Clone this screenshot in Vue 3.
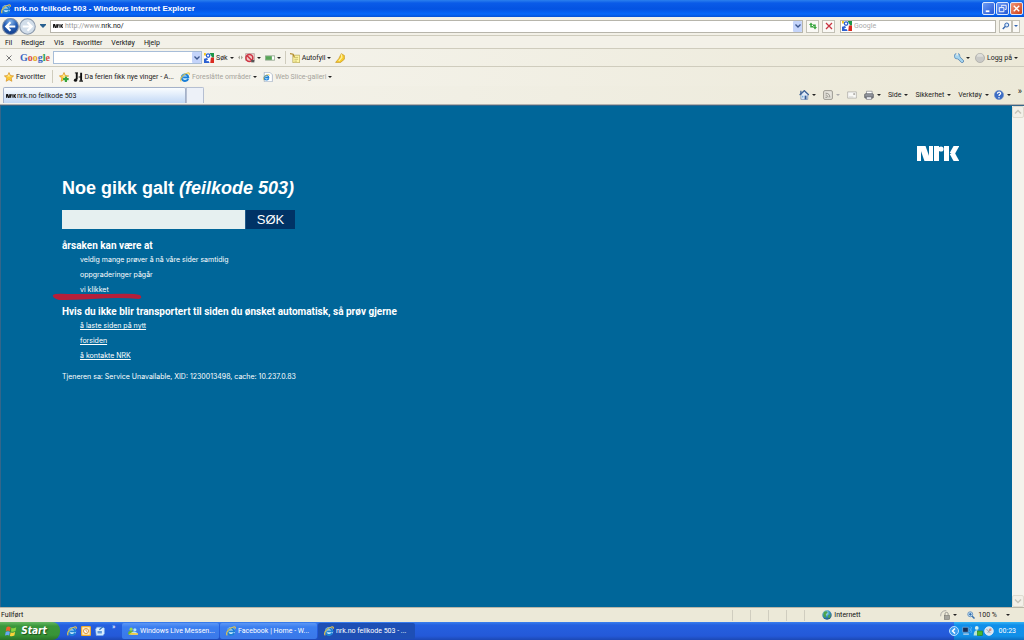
<script setup>
import { ref } from 'vue'

const menus = ['Fil', 'Rediger', 'Vis', 'Favoritter', 'Verktøy', 'Hjelp']
const reasons = ['veldig mange prøver å nå våre sider samtidig', 'oppgraderinger pågår', 'vi klikket']
const links = ['å laste siden på nytt', 'forsiden', 'å kontakte NRK']
const commands = ['Side', 'Sikkerhet', 'Verktøy']
const tasks = [
  { icon: 'messenger', text: 'Windows Live Messen...', active: false },
  { icon: 'ie', text: 'Facebook | Home - W...', active: false },
  { icon: 'ie', text: 'nrk.no feilkode 503 - ...', active: true },
]
const address = ref('nrk.no/')
const query = ref('')
const toolbarQuery = ref('')
const siteQuery = ref('')
</script>

<template>
  <div class="screen">
    <svg class="sprite" aria-hidden="true">
      <defs>
        <radialGradient id="globe" cx=".4" cy=".3" r=".7">
          <stop offset="0" stop-color="#c5ecfa" /><stop offset=".5" stop-color="#3d9bc4" /><stop offset="1" stop-color="#1b5588" />
        </radialGradient>
        <radialGradient id="nav" cx=".5" cy=".2" r=".8">
          <stop offset="0" stop-color="#8bb8ea" /><stop offset=".5" stop-color="#245eb6" /><stop offset="1" stop-color="#123d8a" />
        </radialGradient>
      </defs>
      <symbol id="i-ie" viewBox="0 0 16 16">
        <circle cx="8" cy="8.500" r="6.500" fill="#bfe6fb" />
        <path d="M13 11A5.300 5.300 0 1 1 13.300 8.500H5" fill="none" stroke="#1c7fd6" stroke-width="3" />
        <path d="M2 15C-1 12 4 3 12 1.500c3-.5 3.500 1 2.500 3" fill="none" stroke="#e8c64a" stroke-width="1.800" />
      </symbol>
      <symbol id="i-nrk" viewBox="0 0 42 15">
        <rect x="0" y="0" width="4" height="15" />
        <line x1="5" y1="-1" x2="11" y2="16" stroke="currentColor" stroke-width="6" />
        <rect x="12" y="0" width="4" height="15" />
        <rect x="17" y="0" width="5" height="15" />
        <circle cx="24" cy="3" r="2.600" />
        <rect x="27" y="0" width="5" height="15" />
        <line x1="40" y1="-1" x2="35" y2="8" stroke="currentColor" stroke-width="5" />
        <line x1="35" y1="7" x2="40" y2="16" stroke="currentColor" stroke-width="5" />
      </symbol>
      <symbol id="i-google" viewBox="0 0 16 16">
        <rect width="16" height="16" fill="#fff" />
        <path d="M9 0h7v7h-3z" fill="#1c9648" /><path d="M11 7h5v9h-6z" fill="#d92b20" />
        <path d="M0 9l5-1 4 8H0z" fill="#2b5fd0" /><path d="M0 0h3v4H0z" fill="#f4c51c" />
        <circle cx="6.500" cy="4" r="2.800" fill="none" stroke="#2b5fd0" stroke-width="2" />
        <path d="M4 12h4" stroke="#fff" stroke-width="2" />
      </symbol>
      <symbol id="i-star" viewBox="0 0 16 16">
        <path d="M8 .8l2.200 4.800 5.200.6-3.900 3.500 1.100 5.200L8 12.300l-4.600 2.600 1.100-5.200L.6 6.200l5.200-.6z" fill="#fcc936" stroke="#d28a1c" />
        <path d="M8 3l1.300 3.500 3 .5H5z" fill="#fff0a5" />
      </symbol>
      <symbol id="i-addstar" viewBox="0 0 16 16">
        <use href="#i-star" /><path d="M11 7v9M6.500 11.500h9" stroke="#fff" stroke-width="5" /><path d="M11 7v9M6.500 11.500h9" stroke="#35a33a" stroke-width="3.500" />
      </symbol>
      <symbol id="i-notes" viewBox="0 0 16 16">
        <path d="M6 1v11M13 1v13" stroke="#111" stroke-width="3" /><path d="M3 1.500h5M9 8h5" stroke="#111" stroke-width="1.500" />
        <circle cx="4" cy="13" r="2.600" fill="#111" /><path d="M10 14.500h6" stroke="#111" stroke-width="2" />
      </symbol>
      <symbol id="i-slice" viewBox="0 0 16 16">
        <path d="M2 .5h9l4 4v11H2z" fill="#fff" stroke="#8fa0b8" /><svg x="0" y="3" width="11" height="11"><use href="#i-ie" /></svg>
      </symbol>
      <symbol id="i-block" viewBox="0 0 16 16">
        <path d="M1 1h14v11H1z" fill="#e9d6d4" stroke="#a88" /><circle cx="7" cy="8" r="5.500" fill="#f3c9c9" stroke="#cf3644" stroke-width="2.500" />
        <path d="M3 4l8 8" stroke="#cf3644" stroke-width="2.500" /><path d="M10 11h5v4h-5z" fill="#555" />
      </symbol>
      <symbol id="i-rank" viewBox="0 0 16 16">
        <path d="M.5 4.500h15v7H.5z" fill="#fff" stroke="#688568" /><path d="M1 5h10v6H1z" fill="#58a557" />
      </symbol>
      <symbol id="i-form" viewBox="0 0 16 16">
        <path d="M4.500 3.500h11v12h-11z" fill="#fff7a5" stroke="#a8963c" /><path d="M7 7h6M7 10h6M7 13h4" stroke="#a89b50" />
        <path d="M0 1l5 1 2 5" fill="none" stroke="#b28a28" stroke-width="2" />
      </symbol>
      <symbol id="i-marker" viewBox="0 0 16 16">
        <path d="M10 1l5 3v6l-6 5H1l5-6z" fill="#f7cc2b" stroke="#c08c16" /><path d="M10 2l1 5-5 6" fill="none" stroke="#fff0a0" stroke-width="2" />
      </symbol>
      <symbol id="i-wrench" viewBox="0 0 16 16">
        <path d="M5 5l8 8" stroke="#4677a8" stroke-width="5.500" stroke-linecap="round" />
        <circle cx="5" cy="5" r="4.500" fill="#a6d5ef" stroke="#4677a8" />
        <path d="M5 5l8 8" stroke="#a6d5ef" stroke-width="3.500" stroke-linecap="round" />
        <path d="M5 0v4" stroke="#f0eee2" stroke-width="2.500" />
      </symbol>
      <symbol id="i-user" viewBox="0 0 16 16"><circle cx="8" cy="8" r="7.300" fill="#c9c9c6" stroke="#a2a29f" /><path d="M3 6a5 5 0 0 1 10 0" fill="#deded9" /></symbol>
      <symbol id="i-home" viewBox="0 0 16 16">
        <path d="M3 7v8h11V7L8.500 2z" fill="#dfeaf8" stroke="#617da7" /><path d="M1 8l7.500-7L16 8" fill="none" stroke="#3a6097" stroke-width="2" />
        <path d="M3 1v6" stroke="#3a6097" stroke-width="2" /><path d="M9 9h3v6H9z" fill="#315b98" /><path d="M5 9h2v3H5z" fill="#62a2d5" />
      </symbol>
      <symbol id="i-feed" viewBox="0 0 16 16">
        <rect x="1" y="1" width="14" height="14" rx="2" fill="#e6e4dc" stroke="#96948c" stroke-width="1.500" />
        <path d="M4 5c5 0 7 3 7 7M4 8c3 0 4 2 4 4" fill="none" stroke="#8c8a83" stroke-width="1.500" /><circle cx="5" cy="11.500" r="1.200" fill="#8c8a83" />
      </symbol>
      <symbol id="i-mail" viewBox="0 0 16 16"><path d="M1 3h14v10H1z" fill="#f8f8f5" stroke="#a09f9b" /><path d="M10 5h3v3h-3z" fill="#b4b2ad" /><path d="M3 11h7" stroke="#c2c0bb" /></symbol>
      <symbol id="i-print" viewBox="0 0 16 16">
        <path d="M4 2h9v5H4z" fill="#fff" stroke="#7a7d84" /><rect x="1" y="6" width="14" height="7" rx="1.500" fill="#7b7e85" stroke="#50545c" />
        <path d="M4 11h8v4H4z" fill="#f0f3f8" stroke="#6a6d74" /><path d="M2 8h12" stroke="#c2c5ca" />
      </symbol>
      <symbol id="i-help" viewBox="0 0 16 16">
        <circle cx="8" cy="8" r="7.300" fill="#3b6cc4" stroke="#6f8fc8" /><path d="M5.500 6c0-4 6-3 5 0-.5 1.500-2.500 1.500-2.500 3.500" fill="none" stroke="#fff" stroke-width="2" /><circle cx="8" cy="12.300" r="1.200" fill="#fff" />
      </symbol>
      <symbol id="i-search" viewBox="0 0 16 16"><circle cx="9.500" cy="6" r="4" fill="#d9eafd" stroke="#3467b1" stroke-width="2" /><path d="M6.500 9L1.500 14" stroke="#3467b1" stroke-width="3" /></symbol>
      <symbol id="i-zoom" viewBox="0 0 16 16"><circle cx="6.500" cy="6.500" r="5" fill="#d8efff" stroke="#4d7eae" stroke-width="1.500" /><path d="M3.500 6.500h6M6.500 3.500v6" stroke="#2465a9" stroke-width="2" /><path d="M10 10l5 5" stroke="#3973ad" stroke-width="3" /></symbol>
      <symbol id="i-refresh" viewBox="0 0 16 16">
        <path d="M0 6l4-5 4 5H5.500v2H9v3H2.500V6z" fill="#39a63e" /><path d="M8 10l4 5 4-5h-2.500V5H8v3h2.500v2z" fill="#39a63e" />
      </symbol>
      <symbol id="i-stop" viewBox="0 0 16 16"><path d="M2 2l12 12M14 2L2 14" stroke="#c83440" stroke-width="2.500" /></symbol>
      <symbol id="i-earth" viewBox="0 0 16 16"><circle cx="8" cy="8" r="7.500" fill="url(#globe)" /><path d="M3 3c3-2 5-1 6 1L6 7l1 4-3 1-2-4zM10 8l4-1-1 5-3 1z" fill="#4da34b" /></symbol>
      <symbol id="i-lock" viewBox="0 0 16 16"><path d="M1 10C1 4 4 1 10 1" fill="none" stroke="#a9a8a2" stroke-width="1.500" /><path d="M8 9V6c0-3 5-3 5 0v3" fill="none" stroke="#92918c" stroke-width="1.500" /><rect x="7" y="9" width="8" height="6" fill="#a5a49d" stroke="#77766f" /></symbol>
      <symbol id="i-windows" viewBox="0 0 16 16">
        <path d="M2 3c2-2 4-1 5.500 0L6.500 8c-2-1-3-1-5.500 0z" fill="#f0622b" /><path d="M8.500 3.500c2 1 4 1 6.500-.5l-1 5c-2 1-4 1.500-6 .5z" fill="#8bd43f" />
        <path d="M1 9c2-1 4-1 5.500 0l-1 5c-2-1-3-1-5.500 0z" fill="#67a8f5" /><path d="M7.500 9.500c2 1 4 1 6-.5l-1 5c-2 1-4 1.500-6 .5z" fill="#fbd33b" />
      </symbol>
      <symbol id="i-outlook" viewBox="0 0 16 16"><rect x="1" y="1" width="14" height="14" rx="1" fill="#fff0c6" stroke="#efac32" stroke-width="2" /><circle cx="8" cy="8" r="4" fill="#fff" stroke="#d9892b" stroke-width="1.500" /><path d="M8 5v3l2 1" fill="none" stroke="#bd762d" /></symbol>
      <symbol id="i-desktop" viewBox="0 0 16 16"><path d="M1 5l2-3h10l2 2v8l-2 3H2z" fill="#dbeeff" stroke="#7bafe7" /><path d="M4 8h7v4H4z" fill="#5f99dd" /><path d="M7 6l6-5" stroke="#2d72c0" stroke-width="2" /></symbol>
      <symbol id="i-messenger" viewBox="0 0 16 16"><circle cx="5" cy="5" r="2.500" fill="#9ed84c" /><path d="M0 13c0-7 9-7 10 0z" fill="#67b930" /><circle cx="11" cy="6" r="2.500" fill="#b5e8fa" /><path d="M4 14c1-7 10-7 12 0z" fill="#bae6f7" /><path d="M3 12c4-3 8 1 13-1v3H1z" fill="#f5ca3b" /></symbol>
      <symbol id="i-network" viewBox="0 0 16 16"><path d="M1 2h9v8H1z" fill="#172e57" stroke="#8abce8" /><path d="M2 12h9v2H2z" fill="#c3d7e8" /><path d="M12 3c2 2 2 4 0 6M14 1c3 3 3 7 0 10" fill="none" stroke="#91c9f4" /></symbol>
      <symbol id="i-buddy" viewBox="0 0 16 16"><circle cx="6" cy="3" r="3" fill="#d9f0ec" /><path d="M1 15c0-11 10-11 10 0z" fill="#b9e4d3" /><rect x="7" y="8" width="8" height="7" fill="#49b72e" stroke="#268018" /></symbol>
      <symbol id="i-sound" viewBox="0 0 16 16"><circle cx="8" cy="8" r="7" fill="#dde4ec" stroke="#f8fbff" /><path d="M4 5l6 6M11 4L6 11" stroke="#999da8" stroke-width="1.500" /><circle cx="10" cy="6" r="2" fill="#d58b83" /></symbol>
    </svg>

    <header class="titlebar">
      <svg class="icon"><use href="#i-ie" /></svg>
      <span class="window-title">nrk.no feilkode 503 - Windows Internet Explorer</span>
      <div class="window-buttons">
        <button aria-label="Minimer"><svg viewBox="0 0 12 12"><path d="M3 9h4" stroke="#fff" stroke-width="2" /></svg></button>
        <button aria-label="Gjenopprett"><svg viewBox="0 0 12 12"><path d="M5 4V2.500h5V7H8.500M2.500 5h5v4.500h-5z" fill="none" stroke="#fff" /></svg></button>
        <button class="close" aria-label="Lukk"><svg viewBox="0 0 12 12"><path d="M3 3l6 6M9 3L3 9" stroke="#fff" stroke-width="1.500" /></svg></button>
      </div>
    </header>

    <div class="address-row">
      <button class="nav" aria-label="Tilbake"><svg viewBox="0 0 16 16"><circle cx="8" cy="8" r="7.500" fill="url(#nav)" stroke="#7d8ea7" /><path d="M12.500 8H4M8 4L4 8l4 4" fill="none" stroke="#fff" stroke-width="2" /></svg></button>
      <button class="nav" aria-label="Frem"><svg viewBox="0 0 16 16"><circle cx="8" cy="8" r="7.300" fill="#d2deea" stroke="#8c9aac" /><path d="M3.500 8H12M8 4l4 4-4 4" fill="none" stroke="#fff" stroke-width="2" /></svg></button>
      <button class="recent" aria-label="Siste sider"><svg viewBox="0 0 6 4"><path d="M0 0h6v1L3 4 0 1z" fill="#286090" /></svg></button>
      <div class="address">
        <svg class="favicon"><use href="#i-nrk" /></svg>
        <label for="address">http://www.</label>
        <input id="address" v-model="address">
        <button class="combo" aria-label="Vis adresser"><svg viewBox="0 0 6 4"><path d="M.5.5L3 3 5.500.5" fill="none" stroke="#3b568d" stroke-width="1.300" /></svg></button>
      </div>
      <button class="square" aria-label="Oppdater"><svg class="small"><use href="#i-refresh" /></svg></button>
      <button class="square" aria-label="Stopp"><svg class="small"><use href="#i-stop" /></svg></button>
      <div class="search">
        <svg class="icon"><use href="#i-google" /></svg>
        <input v-model="query" aria-label="Søk med Google" placeholder="Google">
      </div>
      <div class="search-buttons">
        <button class="square" aria-label="Søk"><svg class="small"><use href="#i-search" /></svg></button>
        <button class="square thin" aria-label="Søkevalg"><i class="caret blue-caret"></i></button>
      </div>
    </div>

    <nav class="menubar"><button v-for="m in menus" :key="m">{{ m }}</button></nav>

    <div class="google-bar">
      <button class="close-bar" aria-label="Lukk verktøylinje"><svg viewBox="0 0 6 6"><path d="M.5.5l5 5M5.500.5l-5 5" stroke="#777" /></svg></button>
      <span class="google-logo"><b class="blue">G</b><b class="red">o</b><b class="yellow">o</b><b class="blue">g</b><b class="green">l</b><b class="red">e</b></span>
      <div class="toolbar-search">
        <input v-model="toolbarQuery" aria-label="Google-søk">
        <button class="combo" aria-label="Tidligere søk"><svg viewBox="0 0 6 4"><path d="M.5.5L3 3 5.500.5" fill="none" stroke="#3b568d" stroke-width="1.300" /></svg></button>
      </div>
      <button class="tool"><svg class="icon"><use href="#i-google" /></svg>Søk<i class="caret"></i></button>
      <svg class="splitter" viewBox="0 0 5 5"><path d="M0 2.500L2 .5v4zM5 2.500L3 .5v4z" fill="#aaa89c" /></svg>
      <button class="tool" aria-label="Popup-blokkering"><svg class="icon"><use href="#i-block" /></svg><i class="caret"></i></button>
      <button class="tool" aria-label="PageRank"><svg class="icon"><use href="#i-rank" /></svg><i class="caret"></i></button>
      <span class="divider"></span>
      <button class="tool"><svg class="icon"><use href="#i-form" /></svg>Autofyll<i class="caret"></i></button>
      <button class="tool" aria-label="Marker"><svg class="icon"><use href="#i-marker" /></svg></button>
      <div class="push account">
        <button class="tool" aria-label="Innstillinger"><svg class="icon"><use href="#i-wrench" /></svg><i class="caret"></i></button>
        <button class="tool"><svg class="icon"><use href="#i-user" /></svg>Logg på<i class="caret"></i></button>
      </div>
    </div>

    <div class="favorites">
      <button class="tool"><svg class="icon"><use href="#i-star" /></svg>Favoritter</button>
      <span class="divider"></span>
      <button class="tool" aria-label="Legg til favoritt"><svg class="icon"><use href="#i-addstar" /></svg></button>
      <a class="tool" href="#"><svg class="icon"><use href="#i-notes" /></svg>Da ferien fikk nye vinger - A...</a>
      <button class="tool dim"><svg class="icon"><use href="#i-ie" /></svg>Foreslåtte områder<i class="caret"></i></button>
      <button class="tool dim"><svg class="icon"><use href="#i-slice" /></svg>Web Slice-galleri<i class="caret"></i></button>
    </div>

    <div class="tab-row">
      <button class="tab"><svg class="favicon"><use href="#i-nrk" /></svg>nrk.no feilkode 503</button>
      <button class="new-tab" aria-label="Ny fane"></button>
      <div class="commands">
        <button class="tool" aria-label="Hjem"><svg class="icon"><use href="#i-home" /></svg><i class="caret"></i></button>
        <button class="tool dim" aria-label="Feeder"><svg class="icon"><use href="#i-feed" /></svg><i class="caret pale"></i></button>
        <button class="tool" aria-label="Les e-post"><svg class="icon"><use href="#i-mail" /></svg></button>
        <button class="tool" aria-label="Skriv ut"><svg class="icon"><use href="#i-print" /></svg><i class="caret"></i></button>
        <button v-for="c in commands" :key="c" class="tool">{{ c }}<i class="caret"></i></button>
        <button class="tool help" aria-label="Hjelp"><svg class="icon"><use href="#i-help" /></svg><i class="caret"></i></button>
        <button class="more" aria-label="Flere kommandoer">»</button>
      </div>
    </div>

    <div class="viewport">
      <main>
        <svg class="site-logo" role="img" aria-label="NRK"><use href="#i-nrk" /></svg>
        <h1>Noe gikk galt <em>(feilkode 503)</em></h1>
        <form @submit.prevent>
          <input v-model="siteQuery" aria-label="Søk på nrk.no"><button>SØK</button>
        </form>
        <h2>årsaken kan være at</h2>
        <ul>
          <li v-for="(r, i) in reasons" :key="r">
            {{ r }}
            <svg v-if="i === 2" class="stroke" viewBox="0 0 90 7" aria-hidden="true"><path d="M1 2Q3 0 16 1L58 1Q82 0 88 2Q91 5 87 6Q68 4 40 6Q18 7 7 7Q0 5 1 2z" fill="#b51f3a" /></svg>
          </li>
        </ul>
        <h2>Hvis du ikke blir transportert til siden du ønsket automatisk, så prøv gjerne</h2>
        <ul><li v-for="l in links" :key="l"><a href="#">{{ l }}</a></li></ul>
        <p>Tjeneren sa: Service Unavailable, XID: 1230013498, cache: 10.237.0.83</p>
      </main>
      <div class="scrollbar" aria-hidden="true">
        <span><svg viewBox="0 0 8 6"><path d="M1 4.500L4 1.500l3 3" fill="none" stroke="#c5c3b8" stroke-width="1.500" /></svg></span>
        <span><svg viewBox="0 0 8 6"><path d="M1 1.500l3 3 3-3" fill="none" stroke="#c5c3b8" stroke-width="1.500" /></svg></span>
      </div>
    </div>

    <div class="status">
      <span class="done">Fullført</span>
      <span v-for="n in 5" :key="n" class="cell"></span>
      <span class="zone"><svg class="icon"><use href="#i-earth" /></svg>Internett</span>
      <button class="tool" aria-label="Beskyttelse"><svg class="icon"><use href="#i-lock" /></svg><i class="caret"></i></button>
      <button class="tool zoom-level"><svg class="small"><use href="#i-zoom" /></svg>100 %<i class="caret"></i></button>
    </div>

    <footer class="taskbar">
      <button class="start"><svg class="flag"><use href="#i-windows" /></svg>Start</button>
      <div class="quick">
        <button aria-label="Internet Explorer"><svg class="icon"><use href="#i-ie" /></svg></button>
        <button aria-label="Outlook"><svg class="icon"><use href="#i-outlook" /></svg></button>
        <button aria-label="Vis skrivebord"><svg class="icon"><use href="#i-desktop" /></svg></button>
        <button class="quick-more" aria-label="Flere">»</button>
      </div>
      <button v-for="t in tasks" :key="t.text" class="task" :class="{ active: t.active }"><svg class="icon"><use :href="'#i-' + t.icon" /></svg>{{ t.text }}</button>
      <div class="tray">
        <button class="expand" aria-label="Vis skjulte ikoner"><svg viewBox="0 0 10 10"><circle cx="5" cy="5" r="4.500" fill="#3d9df0" stroke="#b8e0ff" /><path d="M6 2.500L3.500 5 6 7.500" fill="none" stroke="#fff" stroke-width="1.500" /></svg></button>
        <svg class="icon"><use href="#i-network" /></svg>
        <svg class="icon"><use href="#i-buddy" /></svg>
        <svg class="icon"><use href="#i-sound" /></svg>
        <time>00:23</time>
      </div>
    </footer>
  </div>
</template>

<style>
html, body { margin: 0; }
</style>

<style scoped>
* { box-sizing: border-box; }
.screen { display: flex; flex-direction: column; min-height: 100vh; background: #ece9d8; color: #111; font: 7px/10px Roboto, "DejaVu Sans Condensed", sans-serif; white-space: nowrap; }
.sprite { position: absolute; width: 0; height: 0; }
button { font: inherit; color: inherit; border: 0; padding: 0; background: none; display: inline-flex; align-items: center; justify-content: center; }
input { font: inherit; color: inherit; border: 0; padding: 0; background: none; min-width: 0; outline: none; }
svg { display: block; flex: none; }
.icon { width: 10px; height: 10px; }
.small { width: 8px; height: 8px; }
.favicon { width: 10px; height: 4px; fill: currentColor; color: #111; }
.caret { flex: none; border: 2px solid transparent; border-top-color: #222; border-bottom: 0; }
.caret.pale { border-top-color: #aaa; }
.caret.blue-caret { border-top-color: #3467b1; }
.push { margin-left: auto; }
.divider { width: 1px; height: 13px; background: #cfccbd; }

.titlebar { height: 17px; display: flex; align-items: center; gap: 3px; padding: 0 1px; background: linear-gradient(#2b80ee 0, #0a5be8 3px, #0453e2 9px, #0768fa 14px, #0552d6); color: #fff; }
.window-title { font-size: 8px; font-weight: 700; font-family: "Liberation Sans", sans-serif; }
.window-buttons { margin-left: auto; display: flex; gap: 1px; }
.window-buttons button { width: 13px; height: 13px; border: 1px solid #dce8fb; border-radius: 2px; background: linear-gradient(135deg, #6e9cf5, #2356d5); }
.window-buttons svg { width: 11px; height: 11px; }
.window-buttons .close { background: linear-gradient(135deg, #f09678, #ce3c14); }

.address-row { height: 19px; display: flex; align-items: center; padding: 0 4px 0 2px; background: #f3f1e8; border-bottom: 1px solid #cfccbd; }
.nav svg { width: 17px; height: 17px; }
.recent { width: 14px; }
.recent svg { width: 6px; height: 4px; }
.address { flex: 1; height: 13px; display: flex; align-items: center; background: #fff; border: 1px solid #b7b5ab; padding-left: 2px; margin-right: 3px; }
.address label { color: #999; margin-left: 2px; }
.address input { flex: 1; }
.combo { width: 9px; height: 11px; background: #c4d4fa; border-radius: 1px; }
.combo svg { width: 6px; height: 4px; }
.square { width: 13px; height: 13px; background: #faf9f5; border: 1px solid #c3c1b6; margin-right: 3px; }
.search { width: 156px; height: 13px; display: flex; align-items: center; gap: 2px; margin: 0 3px 0 2px; padding-left: 1px; background: #fff; border: 1px solid #b7b5ab; }
.search input { flex: 1; }
.search input::placeholder { color: #aaa; opacity: 1; }
.search-buttons { display: flex; }
.search-buttons .square { margin: 0; }
.search-buttons .thin { width: 8px; }

.menubar { height: 13px; display: flex; align-items: center; gap: 9px; padding: 2px 0 0 5px; background: #f3f1e8; border-bottom: 1px solid #cfccbd; }
.tool { display: inline-flex; align-items: center; gap: 3px; color: #222; text-decoration: none; }
.dim { color: #a5a39b; }
.google-bar { height: 18px; display: flex; align-items: center; gap: 4px; padding: 0 6px; background: linear-gradient(90deg, #f7f6f1, #ece9d8); border-bottom: 1px solid #cfccbd; }
.google-bar .tool { gap: 2px; }
.close-bar svg { width: 6px; height: 6px; }
.google-logo { width: 30px; margin-left: 4px; font: 10px/14px "Liberation Serif", serif; }
.google-logo b { font-weight: 700; }
.blue { color: #3c66c4; } .red { color: #d8504a; } .yellow { color: #e5aa19; } .green { color: #31a04b; }
.toolbar-search { width: 149px; height: 13px; display: flex; align-items: center; margin: 0 -2px 0 -1px; background: #fff; border: 1px solid #a7bdd8; }
.toolbar-search input { flex: 1; }
.splitter { width: 5px; height: 5px; margin-right: -2px; }
.account { display: flex; gap: 5px; }

.favorites { height: 19px; display: flex; align-items: center; gap: 6px; padding-left: 4px; background: linear-gradient(90deg, #f7f6f1, #ece9d8); }
.favorites .tool { gap: 2px; }
.favorites a { margin-left: -2px; }
.tab-row { height: 19px; display: flex; align-items: flex-end; padding: 0 0 1px 3px; background: linear-gradient(90deg, #f5f4ee, #ece9d8); border-bottom: 1px solid #b1b0ae; }
.tab { width: 183px; height: 16px; justify-content: flex-start; gap: 1px; padding-left: 2px; border: 1px solid #a4b1c9; border-bottom: 0; border-radius: 2px 2px 0 0; background: linear-gradient(#fafdff, #c3d9f6); }
.new-tab { width: 18px; height: 16px; border: 1px solid #b5bfd2; border-bottom: 0; border-radius: 0 2px 0 0; background: #edf1f8; }
.commands { margin-left: auto; height: 17px; display: flex; align-items: center; gap: 7px; padding-right: 2px; }
.help { margin-left: -2px; }
.more { font-size: 9px; height: 18px; align-items: flex-start; }

.viewport { flex: 1; display: flex; border: 1px solid #34668a; border-width: 1px 0 0 1px; }
main { flex: 1; position: relative; padding: 70px 61px 0; background: #006699; color: #fff; font-family: "Liberation Sans", Arial, sans-serif; }
.site-logo { position: absolute; top: 40px; right: 53px; width: 42px; height: 15px; color: #fff; fill: #fff; }
h1 { margin: 0; font-size: 18px; line-height: 24px; }
form { display: flex; margin: 10px 0 11px; }
form input { width: 183px; height: 19px; background: #e6f0f0; color: #222; padding: 0 4px; font-size: 12px; }
form button { width: 50px; height: 19px; background: #003366; border-left: 1px solid #1f5a8a; font-size: 13px; }
h2 { margin: 0; font-size: 10px; line-height: 12px; font-family: Roboto, "Liberation Sans", sans-serif; }
ul { list-style: none; margin: 0 0 9px; padding: 0 0 0 18px; }
li, p { font-family: Inter, "Liberation Sans", sans-serif; }
li { position: relative; line-height: 15px; }
li a { color: #fff; text-decoration: underline; }
.stroke { position: absolute; left: -28px; top: 11px; width: 90px; height: 7px; }
p { margin: 0; line-height: 15px; }
ul + p { margin-top: -3px; }
.scrollbar { width: 12px; display: flex; flex-direction: column; justify-content: space-between; background: #f4f3ec; }
.scrollbar span { height: 12px; display: flex; align-items: center; justify-content: center; border: 1px solid #dedcd0; border-radius: 2px; background: #f2f0e8; }
.scrollbar svg { width: 8px; height: 6px; }

.status { height: 15px; display: flex; align-items: center; border-top: 1px solid #b9b6a8; padding-right: 14px; }
.done { flex: 1; padding-left: 1px; }
.cell { width: 18px; height: 11px; border-left: 1px solid #d0cdbf; }
.zone { width: 118px; display: flex; align-items: center; gap: 2px; }
.zoom-level { margin-left: 10px; }
.zoom-level .caret { margin-left: 6px; }

.taskbar { height: 18px; display: flex; align-items: stretch; background: linear-gradient(#3a80ee 0, #2560e0 3px, #2459d8 14px, #1c48b4); color: #fff; }
.start { width: 60px; gap: 4px; padding-right: 8px; border-radius: 0 8px 8px 0; background: linear-gradient(#66b862 0, #3b973b 4px, #379437 13px, #2a7329); font: italic 700 10px/14px "DejaVu Sans Condensed", sans-serif; text-shadow: 1px 1px 1px #1c4e1c; }
.flag { width: 12px; height: 12px; }
.quick { width: 62px; display: flex; gap: 4px; padding-left: 7px; }
.quick-more { align-items: flex-start; margin-left: 3px; }
.task { width: 97px; justify-content: flex-start; gap: 2px; margin: 1px 1px 1px 0; padding-left: 6px; border-radius: 2px; background: linear-gradient(#5c97f5, #3c7ff0 4px, #3a78e8); }
.task.active { background: #1e4fb5; }
.tray { margin-left: auto; display: flex; align-items: center; gap: 1px; padding-right: 8px; background: linear-gradient(#36b5f5 0, #118fea 3px, #1290e8 14px, #0d6fc0); }
.expand { margin: 0 2px 0 -5px; }
.expand svg { width: 10px; height: 10px; }
.tray time { margin-left: 4px; }
</style>
